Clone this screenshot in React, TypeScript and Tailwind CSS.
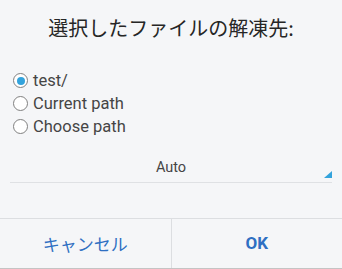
export default function App() {
  const options = [
    { label: "test/", checked: true },
    { label: "Current path", checked: false },
    { label: "Choose path", checked: false },
  ];

  return (
    <div className="w-[342px] h-[269px] bg-[#f5f6f8] flex flex-col font-['Roboto','Noto_Sans_CJK_JP',sans-serif] overflow-hidden">
      {/* Title */}
      <div className="mt-[14px] h-[28px] text-center text-[20px] leading-[28px] text-[#262626] font-['Noto_Sans_CJK_JP',sans-serif]">
        選択したファイルの解凍先:
      </div>

      {/* Radio options */}
      <div className="mt-[27px] pl-[13px] flex flex-col">
        {options.map((o) => (
          <div key={o.label} className="h-[23px] flex items-center gap-[5px]">
            <span className="w-[15px] h-[15px] rounded-full border border-[#808080] flex items-center justify-center bg-white">
              {o.checked && <span className="w-[8px] h-[8px] rounded-full bg-[#33a3dc]" />}
            </span>
            <span className="text-[16.5px] leading-[23px] text-[#454545]">{o.label}</span>
          </div>
        ))}
      </div>

      {/* Spinner */}
      <div className="mt-[15px] mx-[10px] h-[30px] relative border-b border-[#dfe1e4] flex items-center justify-center">
        <span className="text-[14.5px] text-[#454545]">Auto</span>
        <svg className="absolute right-0 bottom-[4px]" width="8" height="7" viewBox="0 0 8 7">
          <polygon points="8,0 8,7 0,7" fill="#33a3dc" />
        </svg>
      </div>

      <div className="flex-1" />

      {/* Buttons */}
      <div className="h-[51px] border-t border-b border-t-[#dcdee1] border-b-[#c4c4c4] flex">
        <button className="flex-1 text-[17px] text-[#2f6fc2] font-['Noto_Sans_CJK_JP',sans-serif]">キャンセル</button>
        <div className="w-px bg-[#dcdee1]" />
        <button className="flex-1 text-[17px] font-bold text-[#2f6fc2]">OK</button>
      </div>
    </div>
  );
}
